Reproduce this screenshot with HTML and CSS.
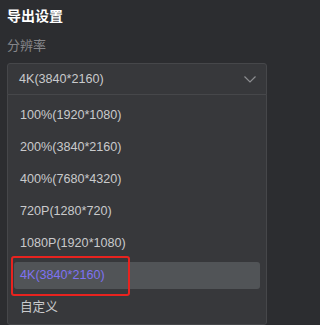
FILE: index.html
```html
<!DOCTYPE html>
<html lang="zh-CN">
<head>
<meta charset="utf-8">
<link rel="stylesheet" href="styles.css">
</head>
<body>
<div class="panel">
  <div class="title">导出设置</div>
  <div class="label">分辨率</div>
  <div class="select">
    <span class="select-value">4K(3840*2160)</span>
    <svg class="chevron" width="12" height="7" viewBox="0 0 12 7"><path d="M0.5 0.5 L6 6 L11.5 0.5" fill="none" stroke="#8c8d90" stroke-width="1.2"/></svg>
  </div>
  <ul class="options">
    <li class="option">100%(1920*1080)</li>
    <li class="option">200%(3840*2160)</li>
    <li class="option">400%(7680*4320)</li>
    <li class="option">720P(1280*720)</li>
    <li class="option">1080P(1920*1080)</li>
    <li class="option selected">4K(3840*2160)<span class="mark"></span></li>
    <li class="option">自定义</li>
  </ul>
</div>
</body>
</html>
```
FILE: styles.css
```css
html, body {
  margin: 0;
  padding: 0;
  background: #2c2d30;
}
body {
  font-family: "Liberation Sans", "Noto Sans CJK SC", sans-serif;
  width: 275px;
  height: 325px;
  overflow: hidden;
}
.panel {
  padding: 6px 8px 0 7px;
  display: flex;
  flex-direction: column;
}
.title {
  font-size: 14px;
  font-weight: bold;
  color: #ffffff;
  line-height: 20px;
}
.label {
  margin-top: 10px;
  font-size: 13px;
  color: #85868a;
  line-height: 20px;
}
.select {
  margin-top: 7px;
  height: 32px;
  box-sizing: border-box;
  border: 1px solid #46474a;
  border-radius: 3px 3px 0 0;
  background: #37383b;
  display: flex;
  align-items: center;
  justify-content: space-between;
  padding: 0 10px 0 11px;
}
.select-value {
  font-size: 12.6px;
  color: #c9cacc;
}
.chevron {
  display: block;
  margin-top: 1px;
}
.options {
  list-style: none;
  margin: -1px 0 0 0;
  padding: 7px 6px 3px 6px;
  border: 1px solid #46474a;
  border-radius: 0 0 3px 3px;
  background: #37383b;
  display: flex;
  flex-direction: column;
  gap: 5px;
}
.option {
  position: relative;
  height: 27px;
  line-height: 27px;
  padding-left: 6px;
  font-size: 12.6px;
  color: #c9cacc;
  border-radius: 3px;
}
.option.selected {
  background: #515457;
  color: #7f72f2;
}
.mark {
  position: absolute;
  left: -3px;
  top: -6px;
  width: 115px;
  height: 36px;
  border: 2px solid #e8231f;
  border-radius: 3px;
}
```
